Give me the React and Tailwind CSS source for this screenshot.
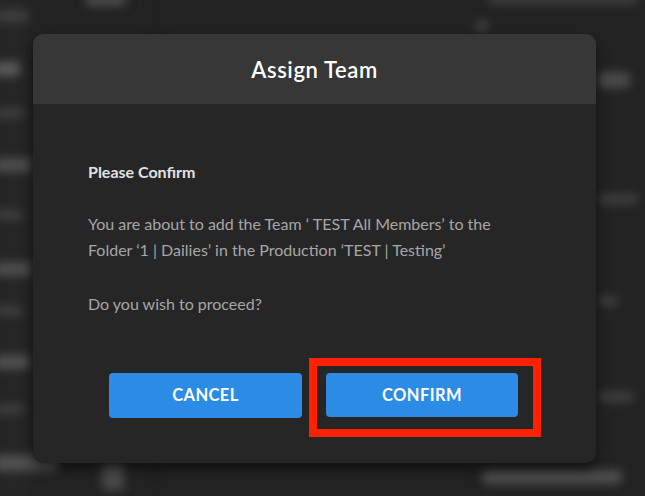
import React from 'react';

const blobs = [
  'left-[-6px] top-[10px] w-[34px] h-[12px]',
  'left-[-6px] top-[62px] w-[26px] h-[14px] bg-[#5a5a5a]',
  'left-[-6px] top-[108px] w-[30px] h-[10px]',
  'left-[-6px] top-[158px] w-[38px] h-[14px] bg-[#4d4d4d]',
  'left-[-6px] top-[210px] w-[28px] h-[10px]',
  'left-[-6px] top-[262px] w-[38px] h-[14px] bg-[#4d4d4d]',
  'left-[-6px] top-[306px] w-[28px] h-[10px]',
  'left-[-6px] top-[355px] w-[36px] h-[14px] bg-[#505050]',
  'left-[-6px] top-[404px] w-[30px] h-[10px]',
  'left-[-6px] top-[455px] w-[64px] h-[16px] bg-[#505050]',
  'left-[86px] top-[-8px] w-[40px] h-[14px] bg-[#4a4a4a]',
  'left-[476px] top-[20px] w-[12px] h-[12px] bg-[#1f5a8f]',
  'left-[488px] top-[-6px] w-[150px] h-[10px] bg-[#3a3a3a]',
  'left-[598px] top-[72px] w-[32px] h-[16px] bg-[#4a4a4a]',
  'left-[598px] top-[194px] w-[40px] h-[10px]',
  'left-[598px] top-[296px] w-[20px] h-[10px]',
  'left-[598px] top-[392px] w-[36px] h-[10px]',
  'left-[102px] top-[462px] w-[22px] h-[28px] bg-[#4a4a4a]',
  'left-[482px] top-[470px] w-[140px] h-[14px] bg-[#4d4d4d]',
];

export default function App() {
  return (
    <div className="relative w-[645px] h-[496px] overflow-hidden bg-[#232323]" style={{ fontFamily: 'Lato, "Open Sans", sans-serif' }}>
      {/* blurred app behind the modal */}
      <div className="absolute inset-0 blur-[5px]">
        <div className="absolute left-0 top-0 w-[30px] h-full bg-[#262626]" />
        <div className="absolute left-[154px] top-0 w-[4px] h-full bg-[#1e1e1e]" />
        <div className="absolute left-[476px] top-0 w-[4px] h-full bg-[#1f1f1f]" />
        {blobs.map((b, i) => (
          <div key={i} className={`absolute rounded-sm bg-[#3f3f3f] ${b}`} />
        ))}
      </div>

      {/* modal */}
      <div className="absolute left-[33px] top-[34px] w-[563px] h-[429px] rounded-[10px] overflow-hidden bg-[#262626] shadow-[0_6px_14px_rgba(0,0,0,0.55)] flex flex-col">
        <div className="h-[70px] bg-[#373737] flex items-center justify-center">
          <h2 className="text-[22px] font-semibold text-white tracking-[0.6px]">Assign Team</h2>
        </div>
        <div className="pl-[55px] pr-[30px] pt-[55px] text-[16px] leading-[26px]">
          <p className="font-bold text-[#e2e2e2]">Please Confirm</p>
          <p className="mt-[26px] text-[#a6a6a6]">
            You are about to add the Team ‘ TEST All Members’ to the
            <br />
            Folder ‘1 | Dailies’ in the Production ‘TEST | Testing’
          </p>
          <p className="mt-[28px] text-[#a6a6a6]">Do you wish to proceed?</p>
        </div>
        <div className="mt-[56px] flex justify-center gap-[24px] pr-[2px]">
          <button className="w-[193px] h-[45px] rounded-[4px] bg-[#2c8ce5] text-white text-[16.5px] font-bold tracking-[0.4px]">CANCEL</button>
          <div className="relative">
            <button className="w-[192px] h-[44px] rounded-[4px] bg-[#2c8ce5] text-white text-[16.5px] font-bold tracking-[0.4px]">CONFIRM</button>
            <div className="absolute left-[-17px] top-[-15px] w-[232px] h-[79px] border-[8px] border-[#ff2100]" />
          </div>
        </div>
      </div>
    </div>
  );
}
